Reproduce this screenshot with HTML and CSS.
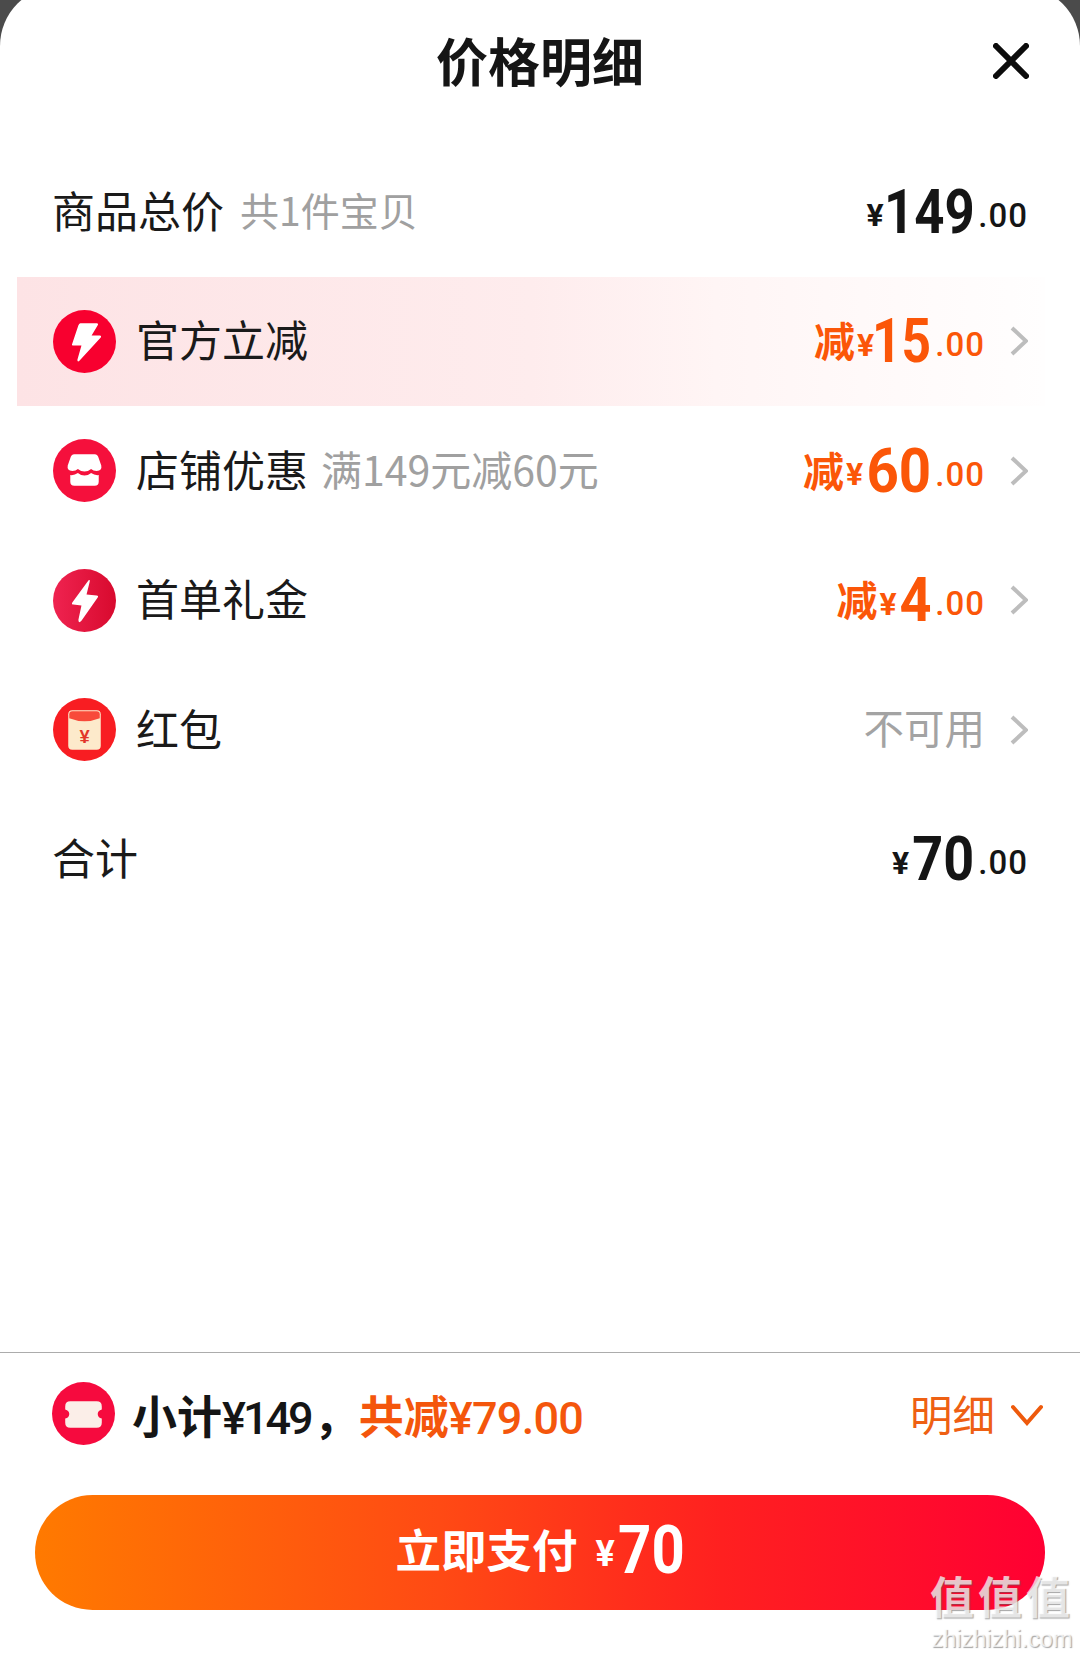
FILE: index.html
```html
<!DOCTYPE html>
<html lang="zh-CN">
<head>
  <meta charset="UTF-8" />
  <meta name="viewport" content="width=device-width, initial-scale=1.0" />
  <title>价格明细</title>
  <link rel="stylesheet" href="styles.css">
</head>
<body>
  <div class="sheet">
    <div class="header">
      <h1 class="title">价格明细</h1>
      <svg class="close" viewBox="0 0 36 36"><path d="M3 3 L33 33 M33 3 L3 33" /></svg>
    </div>

    <div class="rows">
      <div class="row">
        <span class="name">商品总价</span>
        <span class="note note-first">共1件宝贝</span>
        <span class="price"><span class="cur">¥</span><span class="int int-149">149</span><span class="dec">.00</span></span>
      </div>

      <div class="row row-hot">
        <svg class="icon" viewBox="0 0 62 62">
          <circle cx="31" cy="31" r="31" fill="#f8002f" />
          <path d="M27 13 L43 13 Q45 13 44 15 L38 25 L46 25 Q48 25 47 27 L26 50 Q24 52 24 49 L28 35 L20 35 Q18 35 19 33 L25 15 Q26 13 27 13 Z" fill="#fff" />
        </svg>
        <span class="name">官方立减</span>
        <span class="price price-off"><span class="off">减</span><span class="cur">¥</span><span class="int int-15">15</span><span class="dec">.00</span></span>
        <svg class="more" viewBox="0 0 18 30"><path d="M2 2 L16 15 L2 28" /></svg>
      </div>

      <div class="row">
        <svg class="icon" viewBox="0 0 62 62">
          <circle cx="31" cy="31" r="31" fill="#f5103c" />
          <path d="M21 15 H41 Q44 15 45 19 L47.5 26 Q48.5 31 43 31.5 Q39.5 31.5 37.5 29.5 Q34.5 32 31 32 Q27.5 32 24.5 29.5 Q22.5 31.5 19 31.5 Q13.5 31 14.5 26 L17 19 Q18 15 21 15 Z" fill="#fff" />
          <path d="M17 35.5 Q21 36 24.5 33.5 Q27.5 36 31 36 Q34.5 36 37.5 33.5 Q41 36 45 35.5 V42 Q45 46 41 46 H21 Q17 46 17 42 Z" fill="#fff" />
        </svg>
        <span class="name">店铺优惠</span>
        <span class="note">满149元减60元</span>
        <span class="price price-off"><span class="off">减</span><span class="cur">¥</span><span class="int int-60">60</span><span class="dec">.00</span></span>
        <svg class="more" viewBox="0 0 18 30"><path d="M2 2 L16 15 L2 28" /></svg>
      </div>

      <div class="row">
        <svg class="icon" viewBox="0 0 62 62">
          <defs>
            <linearGradient id="boltBg" x1="0" x2="1" y1="0" y2="0">
              <stop offset="0" stop-color="#ef2350" />
              <stop offset="1" stop-color="#d80a2e" />
            </linearGradient>
          </defs>
          <circle cx="31" cy="31" r="31" fill="url(#boltBg)" />
          <path d="M35 11 Q37 10 36 13 L33 25 L43 26 Q45 26 44 28 L28 51 Q25 54 25 50 L28 36 L20 35 Q18 35 19 33 Z" fill="#fff" />
        </svg>
        <span class="name">首单礼金</span>
        <span class="price price-off"><span class="off">减</span><span class="cur">¥</span><span class="int int-4">4</span><span class="dec">.00</span></span>
        <svg class="more" viewBox="0 0 18 30"><path d="M2 2 L16 15 L2 28" /></svg>
      </div>

      <div class="row">
        <svg class="icon" viewBox="0 0 62 62">
          <circle cx="31" cy="31" r="31" fill="#f81d22" />
          <rect x="15" y="12" width="32" height="39" rx="4" fill="#fdeacb" />
          <path d="M16 16 Q16 13 19 13 L43 13 Q46 13 46 16 L46 20 Q31 26 16 20 Z" fill="#f84a3a" />
          <text class="icon-yuan" x="31" y="44" text-anchor="middle">¥</text>
        </svg>
        <span class="name">红包</span>
        <span class="muted">不可用</span>
        <svg class="more" viewBox="0 0 18 30"><path d="M2 2 L16 15 L2 28" /></svg>
      </div>

      <div class="row">
        <span class="name">合计</span>
        <span class="price"><span class="cur">¥</span><span class="int int-70">70</span><span class="dec">.00</span></span>
      </div>
    </div>

    <div class="footer">
      <div class="summary">
        <svg class="icon" viewBox="0 0 62 62">
          <circle cx="31" cy="31" r="31" fill="#f60a3e" />
          <path d="M18 19 L44 19 Q49 19 49 24 L49 27 Q45 28 45 31.5 Q45 35 49 36 L49 40 Q49 45 44 45 L18 45 Q13 45 13 40 L13 36 Q17 35 17 31.5 Q17 28 13 27 L13 24 Q13 19 18 19 Z" fill="#fbeee8" />
        </svg>
        <span class="sum-text">小计<span class="sum-num sum-tight">¥149</span>，</span>
        <span class="sum-off">共减<span class="sum-num">¥79.00</span></span>
        <span class="detail">明细</span>
        <svg class="down" viewBox="0 0 32 22"><path d="M2 3 L16 19 L30 3" /></svg>
      </div>
      <div class="pay">
        <span class="pay-label">立即支付</span>
        <span class="pay-cur">¥</span><span class="pay-num">70</span>
      </div>
    </div>
  </div>

  <div class="stamp">
    <div class="stamp-big">值值值</div>
    <div class="stamp-url">zhizhizhi.com</div>
  </div>
</body>
</html>
```

FILE: styles.css
```css
* { box-sizing: border-box; }
html, body {
  margin: 0;
  padding: 0;
  height: 100%;
  background: #4b4b4b;
  overflow: hidden;
  font-family: "Noto Sans CJK SC", "Noto Sans", sans-serif;
}
.sheet {
  display: flex;
  flex-direction: column;
  height: 1669px;
  margin-top: -14px;
  background: #fff;
  border-radius: 60px 60px 0 0;
}

/* header */
.header {
  display: flex;
  align-items: center;
  justify-content: center;
  position: relative;
  height: 161px;
  padding-bottom: 15px;
  flex-shrink: 0;
}
.title {
  margin: 0;
  font-size: 52px;
  font-weight: 700;
  color: #151515;
}
.close {
  position: absolute;
  left: 993px;
  top: 57px;
  width: 36px;
  height: 36px;
}
.close path {
  fill: none;
  stroke: #0c0c0c;
  stroke-width: 6;
  stroke-linecap: round;
}

/* rows */
.rows {
  margin: 0 35px 0 17px;
}
.row {
  display: flex;
  align-items: center;
  height: 129.5px;
  padding-left: 35px;
  position: relative;
}
.row-hot {
  background: linear-gradient(90deg, #fde3e5 0%, #feeced 50%, #fff5f5 68%, #fffefe 100%);
}
.icon {
  width: 63px;
  height: 63px;
  flex-shrink: 0;
  margin-left: 1px;
  margin-right: 20px;
}
.icon-yuan {
  font-family: "Liberation Sans", sans-serif;
  font-size: 18px;
  font-weight: 700;
  fill: #e2352a;
}
.name {
  font-size: 43px;
  color: #1a1a1a;
  margin-bottom: 6px;
}
.note {
  margin-left: 13px;
  margin-bottom: 6px;
  font-size: 41px;
  color: #a0a0a0;
}
.note-first {
  margin-left: 16px;
  font-size: 39px;
}
.muted {
  margin-left: auto;
  margin-right: 60px;
  margin-bottom: 6px;
  font-size: 40.5px;
  color: #a3a3a3;
}
.more {
  position: absolute;
  right: 17px;
  top: 50%;
  margin-top: -15px;
  width: 18px;
  height: 30px;
}
.more path {
  fill: none;
  stroke: #bdbdbd;
  stroke-width: 4;
}

/* prices */
.price {
  display: flex;
  align-items: center;
  margin-left: auto;
  margin-right: 17px;
  color: #151515;
  font-family: "Roboto", sans-serif;
  font-weight: 700;
}
.price-off {
  margin-right: 60px;
  color: #fb5608;
}
.cur {
  font-size: 32px;
  margin-top: 7px;
  margin-right: 3px;
}
.int {
  display: inline-block;
  font-size: 62px;
  line-height: 70px;
  transform-origin: right center;
}
/* the reference digits are a narrow din-like face, squeeze roboto to fit */
.int-149 { transform: scaleX(0.85); margin-left: -19px; }
.int-15 { transform: scaleX(0.83); margin-left: -17px; }
.int-60 { transform: scaleX(0.91); margin-left: -6px; }
.int-70 { transform: scaleX(0.87); margin-left: -9px; }
.int-4 { transform: scaleX(0.9); margin-left: -4px; }
.dec {
  margin-left: 4px;
  margin-top: 7px;
  font-size: 33px;
  font-weight: 500;
  letter-spacing: 1px;
}
.off {
  font-family: "Noto Sans CJK SC", sans-serif;
  font-size: 41px;
  margin-bottom: 4px;
  margin-right: 2px;
}

/* footer */
.footer {
  margin-top: auto;
  border-top: 1px solid #acacac;
  padding-bottom: 45px;
}
.summary {
  display: flex;
  align-items: center;
  height: 120px;
  margin-bottom: 22px;
  padding: 0 37px 0 51px;
}
.summary .icon {
  margin-right: 17px;
}
.sum-text {
  font-size: 45px;
  font-weight: 700;
  color: #151515;
  margin-top: 2px;
}
.sum-off {
  font-size: 45px;
  font-weight: 700;
  color: #f4560c;
  margin-top: 2px;
}
.sum-num {
  font-family: "Roboto", sans-serif;
  font-size: 45px;
  font-weight: 500;
  letter-spacing: -0.7px;
}
.sum-tight {
  letter-spacing: -3px;
  margin-right: 3px;
}
.detail {
  margin-left: auto;
  font-size: 42.5px;
  color: #ee6013;
  margin-bottom: 2px;
}
.down {
  width: 32px;
  height: 22px;
  margin-left: 16px;
  margin-top: 4px;
}
.down path {
  fill: none;
  stroke: #ee5a0c;
  stroke-width: 4;
  stroke-linecap: round;
}
.pay {
  display: flex;
  align-items: center;
  justify-content: center;
  height: 115px;
  margin: 0 35px;
  border-radius: 58px;
  background: linear-gradient(90deg, #ff7a00 0%, #ff4a14 40%, #ff2020 68%, #ff0033 100%);
  color: #fff;
}
.pay-label {
  font-size: 45.5px;
  font-weight: 700;
  margin-bottom: 9px;
}
.pay-cur {
  margin-left: 18px;
  margin-top: 2px;
  font-family: "Roboto", sans-serif;
  font-size: 36px;
  font-weight: 700;
}
.pay-num {
  display: inline-block;
  margin-left: -6px;
  margin-bottom: 4px;
  font-family: "Roboto", sans-serif;
  font-size: 66px;
  font-weight: 700;
  transform: scaleX(0.88);
  transform-origin: right center;
}

/* site watermark over the corner */
.stamp {
  position: absolute;
  left: 928px;
  top: 1563px;
  width: 148px;
  color: rgba(255, 255, 255, 0.72);
  text-shadow: 1px 1px 1px rgba(90, 90, 90, 0.55);
  text-align: center;
}
.stamp-big {
  font-size: 44px;
  font-weight: 700;
  line-height: 64px;
  letter-spacing: 4px;
  white-space: nowrap;
}
.stamp-url {
  font-family: "Liberation Sans", sans-serif;
  font-size: 23.5px;
  line-height: 25px;
  white-space: nowrap;
}
```
